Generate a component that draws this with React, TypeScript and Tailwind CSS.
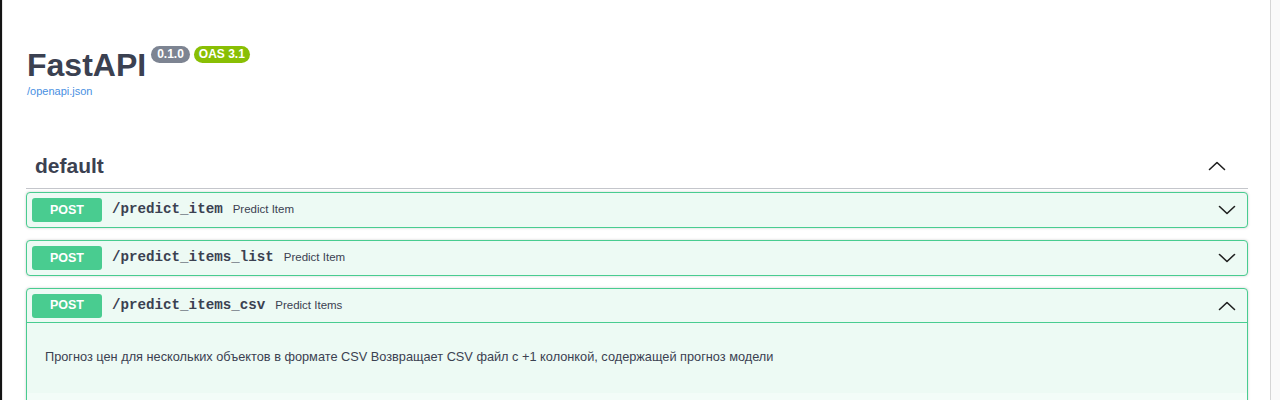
import React from "react";

const sans = { fontFamily: '"Liberation Sans", Arial, sans-serif' };

function Chevron({ up }: { up?: boolean }) {
  return (
    <svg width="18" height="12" viewBox="0 0 18 12" fill="none">
      <polyline
        points={up ? "1.5,9.5 9,2.5 16.5,9.5" : "1.5,2.5 9,9.5 16.5,2.5"}
        stroke="#1f1f1f"
        strokeWidth="1.6"
        strokeLinecap="round"
        strokeLinejoin="round"
      />
    </svg>
  );
}

function OpHeader({ path, summary, open }: { path: string; summary: string; open?: boolean }) {
  return (
    <div className={`flex h-[34px] items-center pl-[5px] pr-[11px] ${open ? "border-b border-[#49cc90]" : ""}`}>
      <div className="flex h-[24px] w-[70px] items-center justify-center rounded-[3px] bg-[#49cc90] text-[12.5px] font-bold text-white">
        POST
      </div>
      <span
        className="ml-[10px] text-[14.2px] font-bold text-[#3b4151]"
        style={{ fontFamily: '"Liberation Mono", "Courier New", monospace' }}
      >
        {path}
      </span>
      <span className="ml-[10px] text-[11.5px] text-[#3b4151]">{summary}</span>
      <div className="ml-auto flex items-center">
        <Chevron up={open} />
      </div>
    </div>
  );
}

export default function App() {
  return (
    <div className="flex h-[400px] w-[1280px] overflow-hidden bg-white" style={sans}>
      <div className="w-[2px] shrink-0 bg-[#141414]" />
      <div className="flex min-w-0 flex-1 flex-col border-l border-[#e6e6e6]">
        <div className="h-[2px]" />
        <div className="h-px bg-[#ececec]" />
        <div className="flex flex-col pl-[23px] pr-[22px]">
          <div className="mt-[45px] flex items-start pl-[1px]">
            <h2 className="mt-[4px] h-[32px] text-[32px] font-bold leading-[32px] text-[#3b4151]">FastAPI</h2>
            <span className="ml-[5px] mt-[1px] h-[17px] rounded-full bg-[#7d8492] px-[6px] text-[12px] font-bold leading-[17px] text-white">
              0.1.0
            </span>
            <span className="ml-[4px] mt-[1px] h-[17px] rounded-full bg-[#89bf04] px-[5px] text-[12px] font-bold leading-[17px] text-white">
              OAS 3.1
            </span>
          </div>
          <div className="mt-[4px] pl-[1px] text-[11px] leading-[13px] text-[#4990e2]">/openapi.json</div>

          <div className="mt-[46px] flex h-[45px] items-center border-b border-[#c4c6cb] pl-[9px] pr-[22px]">
            <h3 className="text-[21px] font-bold leading-[26px] text-[#3b4151]">default</h3>
            <div className="ml-auto flex items-center">
              <Chevron up />
            </div>
          </div>

          <div className="mt-[3px] flex flex-col gap-[12px]">
            <div className="rounded-[4px] border border-[#49cc90] bg-[#edfaf4] shadow-[0_0_3px_rgba(0,0,0,0.19)]">
              <OpHeader path="/predict_item" summary="Predict Item" />
            </div>
            <div className="rounded-[4px] border border-[#49cc90] bg-[#edfaf4] shadow-[0_0_3px_rgba(0,0,0,0.19)]">
              <OpHeader path="/predict_items_list" summary="Predict Item" />
            </div>
            <div className="h-[200px] rounded-[4px] border border-[#49cc90] bg-[#edfaf4] shadow-[0_0_3px_rgba(0,0,0,0.19)]">
              <OpHeader path="/predict_items_csv" summary="Predict Items" open />
              <div className="h-[70px] pl-[18px] pt-[25px] text-[12.75px] leading-[17px] text-[#3b4151]">
                Прогноз цен для нескольких объектов в формате CSV Возвращает CSV файл с +1 колонкой, содержащей прогноз модели
              </div>
              <div className="h-[60px] bg-[#f3fcf8]" />
            </div>
          </div>
        </div>
      </div>
      <div className="w-[10px] shrink-0 border-l border-[#d6d6d6] bg-[#fafafa]" />
    </div>
  );
}
